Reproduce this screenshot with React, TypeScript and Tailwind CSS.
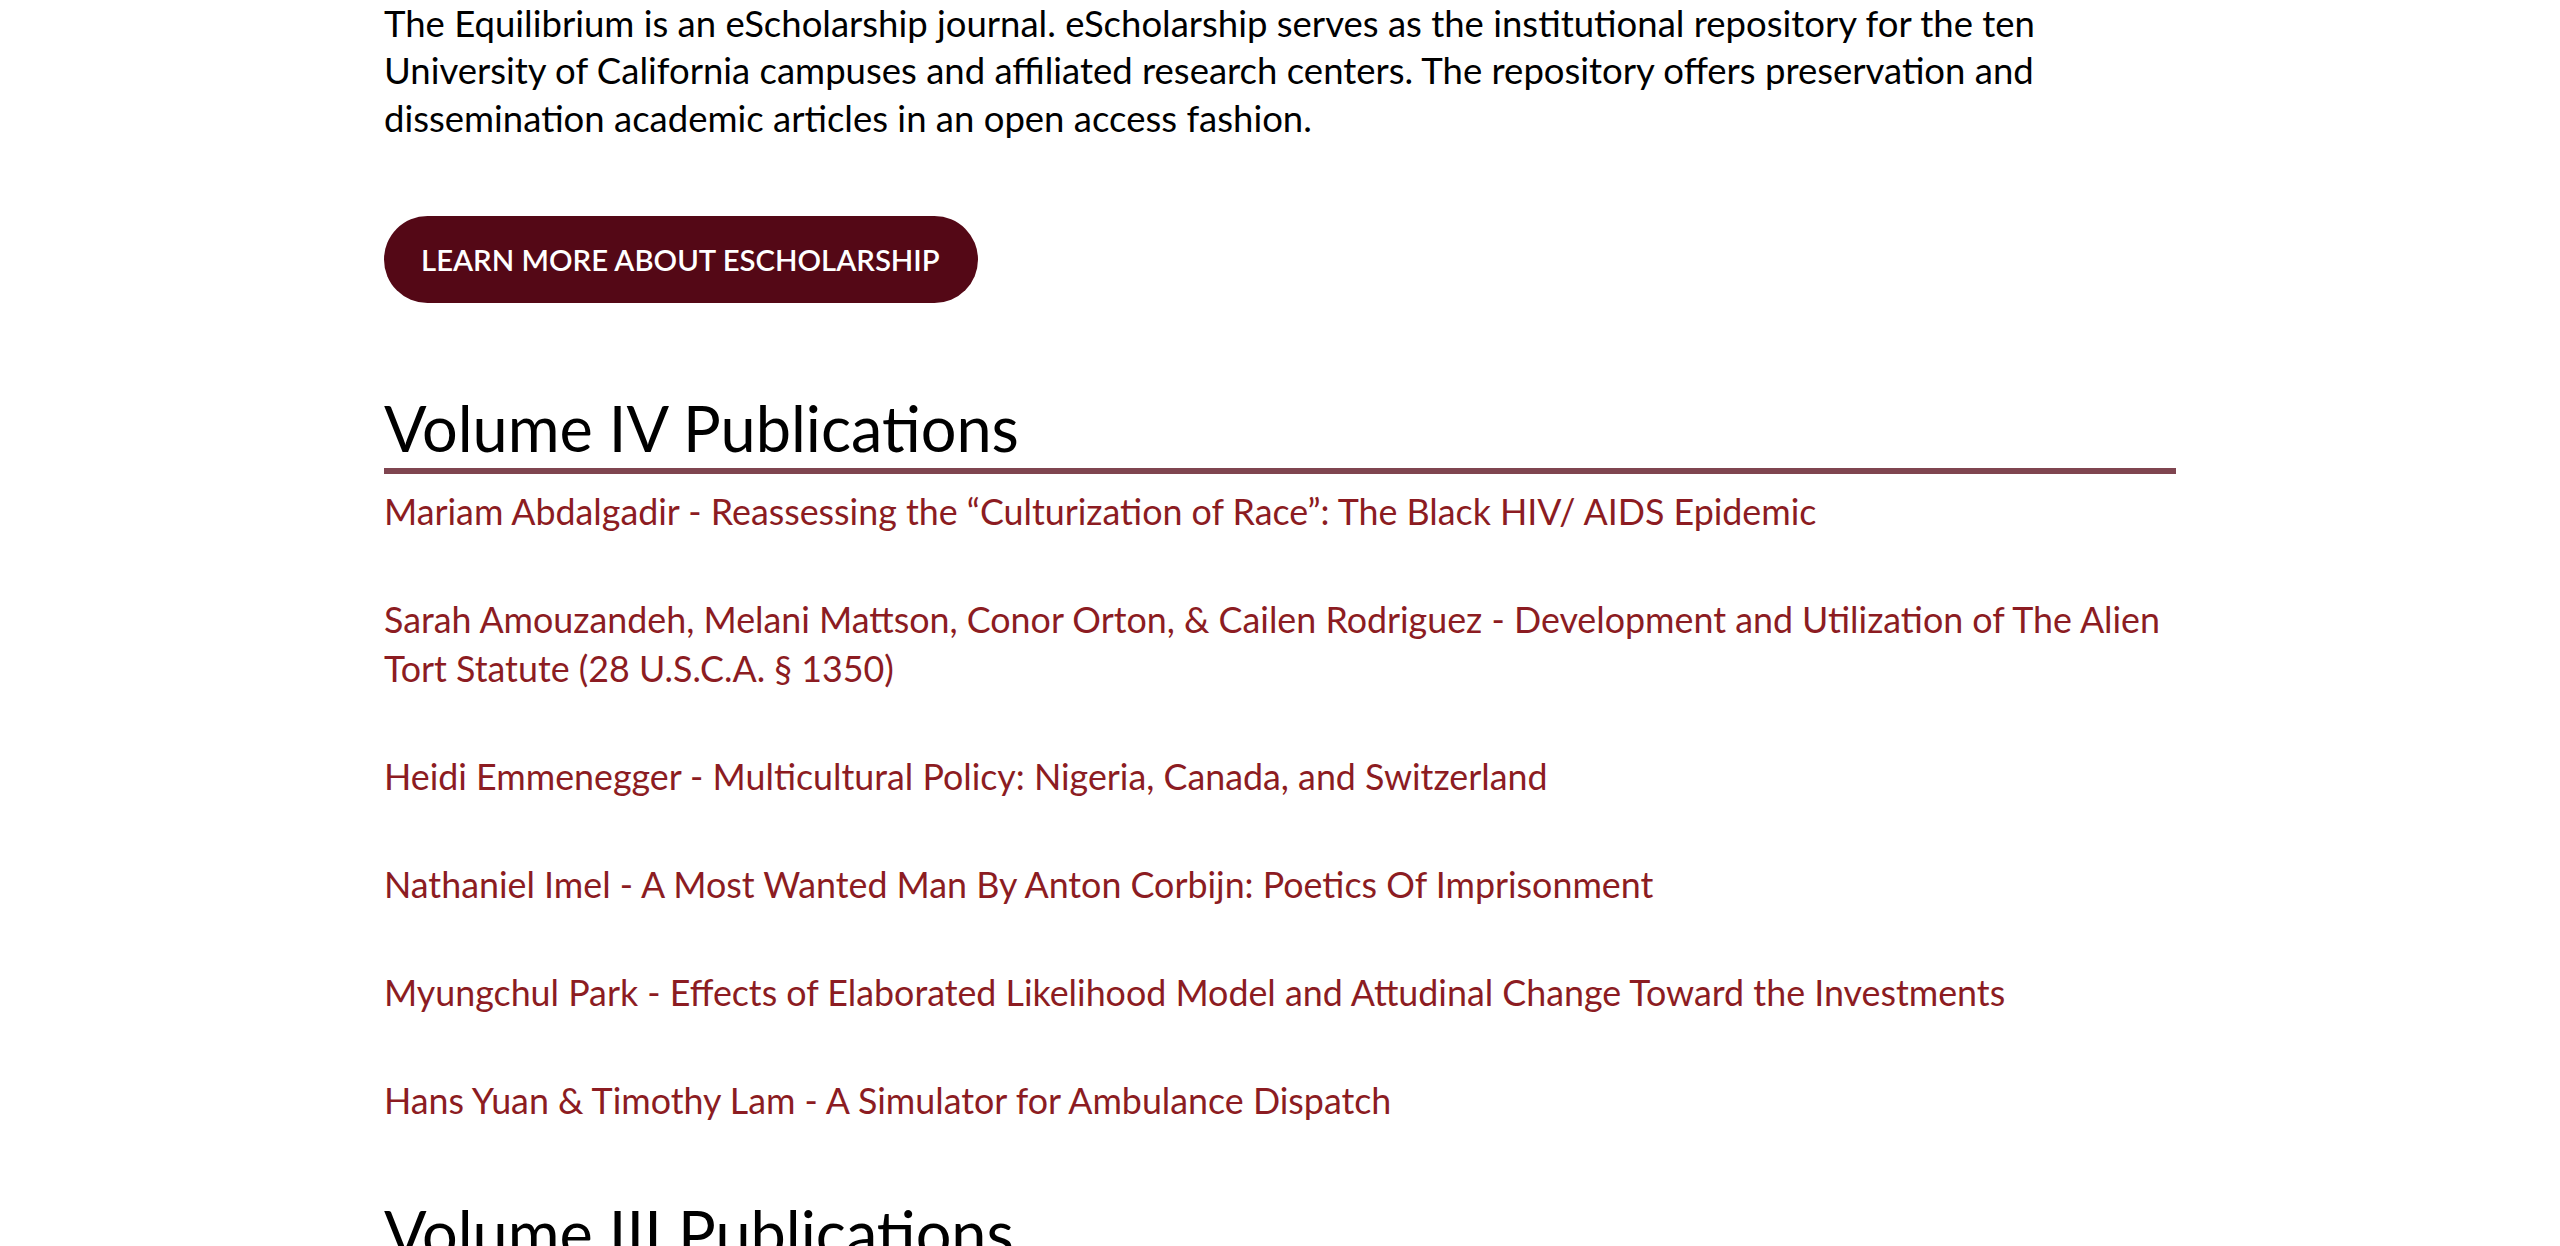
const publications = [
  "Mariam Abdalgadir - Reassessing the \u201cCulturization of Race\u201d: The Black HIV/ AIDS Epidemic",
  "Sarah Amouzandeh, Melani Mattson, Conor Orton, & Cailen Rodriguez - Development and Utilization of The Alien Tort Statute (28 U.S.C.A. \u00a7 1350)",
  "Heidi Emmenegger - Multicultural Policy: Nigeria, Canada, and Switzerland",
  "Nathaniel Imel - A Most Wanted Man By Anton Corbijn: Poetics Of Imprisonment",
  "Myungchul Park - Effects of Elaborated Likelihood Model and Attudinal Change Toward the Investments",
  "Hans Yuan & Timothy Lam - A Simulator for Ambulance Dispatch",
];

const VolumeHeading = ({ title }: { title: string }) => (
  <div>
    <h2 className="text-[63px] leading-none font-normal text-black">{title}</h2>
    <div className="mt-[9px] h-[6px] w-full bg-[#7f4550]"></div>
  </div>
);

export default function App() {
  return (
    <div className="min-h-screen bg-white">
      <main className="mx-auto w-[1792px] font-[Lato,sans-serif]">
        {/** Intro */}
        <p className="text-[36.5px] leading-[47.4px] text-black">
          The Equilibrium is an eScholarship journal. eScholarship serves as the
          institutional repository for the ten University of California campuses
          and affiliated research centers. The repository offers preservation and
          dissemination academic articles in an open access fashion.
        </p>
        <a
          href="#"
          className="mt-[74px] inline-flex h-[87px] items-center rounded-full bg-[#540816] pl-[37px] pr-[38px] text-[29.3px] font-semibold uppercase text-white"
        >
          Learn more about eScholarship
        </a>

        {/** Volume IV */}
        <section className="mt-[93px]">
          <VolumeHeading title="Volume IV Publications" />
          <ul className="mt-[13px] flex flex-col gap-[59px]">
            {publications.map((pub) => (
              <li key={pub}>
                <a href="#" className="text-[35.8px] leading-[49px] text-[#8c1c22]">
                  {pub}
                </a>
              </li>
            ))}
          </ul>
        </section>

        {/** Volume III */}
        <section className="mt-[76px] pb-20">
          <VolumeHeading title="Volume III Publications" />
        </section>
      </main>
    </div>
  );
}
